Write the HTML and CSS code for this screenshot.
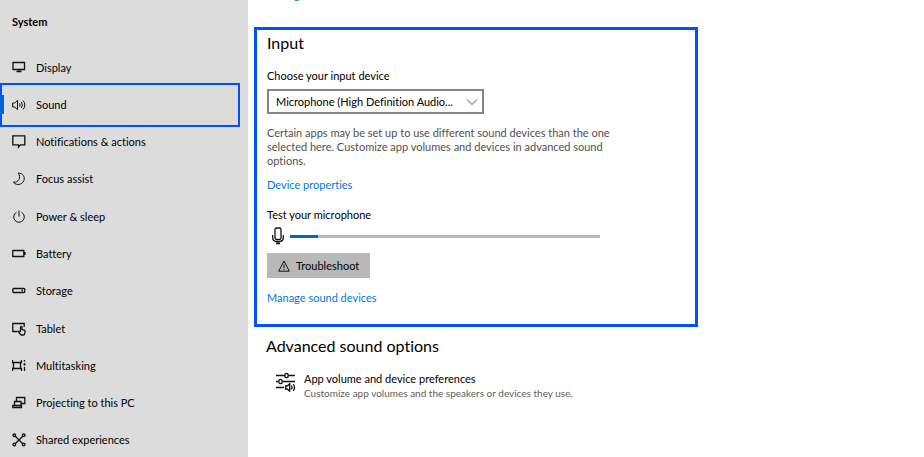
FILE: index.html
```html
<!DOCTYPE html>
<html lang="en">
<head>
<meta charset="utf-8">
<meta name="viewport" content="width=device-width, initial-scale=1">
<title>Sound settings</title>
<link rel="stylesheet" href="styles.css">
</head>
<body>
<div class="settings">
  <aside class="sidebar">
    <h2 class="sidebar-title">System</h2>
    <nav class="nav" aria-label="System">
      <a class="nav-item" href="#display">
        <svg class="icon" viewBox="0 0 14 14"><path d="M1 1.500h11.500v7H1zM7 8.500v2M4.500 10.500h5"/></svg>
        <span>Display</span></a>
      <a class="nav-item nav-item-current" href="#sound" aria-current="page">
        <svg class="icon icon-thin" viewBox="0 0 14 14"><path d="M.7 5h2L5.500 2.300v9.400L2.700 9h-2zM7.500 5.300q1.200 1.700 0 3.400M9.300 3.900q2.200 3.100 0 6.200M11.200 2.600q3.200 4.400 0 8.800"/></svg>
        <span>Sound</span></a>
      <a class="nav-item" href="#notifications">
        <svg class="icon" viewBox="0 0 14 14"><path d="M.8 .8h12v9H8.500L6.500 12v-2.200H.8z"/></svg>
        <span>Notifications &amp; actions</span></a>
      <a class="nav-item" href="#focus">
        <svg class="icon icon-thin" viewBox="0 0 14 14"><path d="M6.300 1C11 1.200 13.300 5 11.800 8.700 10.200 12.800 4.500 14 1.300 10.200 6.500 10.800 9.300 5.800 6.300 1z"/></svg>
        <span>Focus assist</span></a>
      <a class="nav-item" href="#power">
        <svg class="icon icon-thin" viewBox="0 0 14 14"><path d="M4.500 2.300a5.300 5.300 0 1 0 5 0M7 .6v6"/></svg>
        <span>Power &amp; sleep</span></a>
      <a class="nav-item" href="#battery">
        <svg class="icon" viewBox="0 0 14 14"><path d="M.8 3.500h11v6h-11zM13 5v3"/></svg>
        <span>Battery</span></a>
      <a class="nav-item" href="#storage">
        <svg class="icon" viewBox="0 0 14 14"><rect x=".8" y="4.500" width="12" height="4" rx="1"/><path d="M9.500 6.500h1.500"/></svg>
        <span>Storage</span></a>
      <a class="nav-item" href="#tablet">
        <svg class="icon" viewBox="0 0 14 14"><path d="M5.500 9.500H.8v-8h11.400v3.500M8.500 9.500V4.800q.8-1 1.500 0v2.700l2.300.6q.9.300.8 1.400l-.6 2.700q-.3.800-1.200.8H9.500q-.8 0-1.300-.8L6.300 9.500q.6-1 2.200.6"/></svg>
        <span>Tablet</span></a>
      <a class="nav-item" href="#multitasking">
        <svg class="icon" viewBox="0 0 14 14"><path d="M1.500 3.500h7v6h-7zM.5 1v2.500h9V1M.5 12V9.500h9V12M12.500 1v1.500M12.500 4v2.500M12.500 8v4M11.500 5.500h2"/></svg>
        <span>Multitasking</span></a>
      <a class="nav-item" href="#projecting">
        <svg class="icon" viewBox="0 0 14 14"><path d="M4.500 5.500v-4h8.300v6H9M2.500 5.500H9v4H2.500zM.8 11.500V9.500h8.700v2z"/></svg>
        <span>Projecting to this PC</span></a>
      <a class="nav-item" href="#shared">
        <svg class="icon" viewBox="0 0 14 14"><path d="M3.300 3.300l7.400 7.400M10.700 3.300l-7.400 7.400"/><circle cx="2.300" cy="2.300" r="1.300"/><circle cx="11.700" cy="2.300" r="1.300"/><circle cx="2.300" cy="11.500" r="1.300"/><circle cx="11.700" cy="11.500" r="1.300"/></svg>
        <span>Shared experiences</span></a>
    </nav>
  </aside>
  <main class="content">
    <a class="link output-link" href="#output-devices">Manage sound devices</a>
    <section class="panel">
      <h2 class="heading">Input</h2>
      <label class="label" for="device">Choose your input device</label>
      <div class="select-wrap">
        <select class="select" id="device"><option>Microphone (High Definition Audio...</option></select>
        <svg class="chevron" viewBox="0 0 12 12"><path d="M1 3.500l5 5 5-5"/></svg>
      </div>
      <p class="note">Certain apps may be set up to use different sound devices than the one selected here. Customize app volumes and devices in advanced sound options.</p>
      <a class="link" href="#properties">Device properties</a>
      <p class="label test-label" id="test">Test your microphone</p>
      <div class="meter">
        <svg class="mic" viewBox="0 0 14 18"><rect x="4" y="1" width="6" height="11.500" rx="1.500"/><path d="M1.700 8v3q0 3 3.300 3.500h4q3.300-.5 3.300-3.500V8M7 14.500v2M5 16.500h4"/></svg>
        <div class="track" role="meter" aria-labelledby="test" aria-valuenow="9" aria-valuemin="0" aria-valuemax="100"><div class="level"></div></div>
      </div>
      <button class="button" type="button">
        <svg class="warning" viewBox="0 0 12 12"><path d="M6 1L11.300 11.200H.7zM6 4.500v3.700M6 9.200v1"/></svg>
        Troubleshoot</button>
      <a class="link" href="#input-devices">Manage sound devices</a>
    </section>
    <section class="advanced">
      <h2 class="heading">Advanced sound options</h2>
      <a class="preference" href="#app-volume">
        <svg class="mixer" viewBox="0 0 20 20"><path d="M0 3.500h8.500M12.500 3.500H19M0 9.500h2.500M6.500 9.500H19M0 15.500h8"/><ellipse cx="10.500" cy="3.500" rx="1.700" ry="2.200"/><ellipse cx="4.500" cy="9.500" rx="1.700" ry="2.200"/><path d="M9.600 14h1.600l2.500-2.200v7.400L11.200 17H9.600zM15.300 13.500q1.400 2 0 4M17.300 12q2.300 3.500 0 7"/></svg>
        <span class="preference-text"><span class="preference-title">App volume and device preferences</span><span class="preference-detail">Customize app volumes and the speakers or devices they use.</span></span>
      </a>
    </section>
  </main>
</div>
</body>
</html>
```
FILE: styles.css
```css
* { box-sizing: border-box; }

body {
  margin: 0;
  background: #fff;
  color: #000;
  font-family: Lato, "Open Sans", sans-serif;
  font-size: 11px;
  font-variant-ligatures: none;
  line-height: 14px;
}

h2, p { margin: 0; font-weight: 400; }
a { text-decoration: none; }

svg {
  flex: none;
  fill: none;
  stroke: #111;
  stroke-width: 1.3;
}

.settings {
  display: flex;
  height: 100vh;
  overflow: hidden;
}

.sidebar {
  display: flex;
  flex-direction: column;
  flex: none;
  width: 248px;
  background: #dcdcdc;
}

.sidebar-title {
  padding: 15px 12px 20px;
  font-size: 11px;
  font-weight: 700;
}

.nav {
  display: grid;
  flex: 1;
  grid-auto-rows: 1fr;
  margin-bottom: -2px;
}

.nav-item {
  display: flex;
  align-items: center;
  gap: 10px;
  padding-left: 12px;
  color: #000;
}

.icon { width: 14px; height: 14px; }
.icon-thin { stroke-width: 1; }

.nav-item-current {
  position: relative;
  margin: -3px 8px -3px 0;
  border: 2px solid #0050ff;
  padding-left: 10px;
}

.nav-item-current::before {
  content: "";
  position: absolute;
  left: -2px;
  width: 4px;
  height: 19px;
  background: #0063d8;
}

.content {
  flex: 1;
  min-width: 0;
  padding: 0 6px;
}

.link {
  display: block;
  width: fit-content;
  color: #0078d7;
}

.output-link { margin: -12px 0 25px 13px; }

.panel {
  max-width: 444px;
  height: 300px;
  border: 3px solid #0050ff;
  padding: 2px 10px;
}

.heading {
  font-size: 16px;
  line-height: 22px;
}

.label { display: block; }
.panel > .label { margin-top: 15px; }

.select-wrap {
  display: flex;
  align-items: center;
  width: 217px;
  margin: 6px 0 12px;
}

.select {
  appearance: none;
  width: 100%;
  height: 25px;
  border: 2px solid #858585;
  border-radius: 0;
  padding: 0 20px 0 7px;
  background: #fff;
  color: #000;
  font: inherit;
}

.chevron {
  width: 12px;
  height: 12px;
  margin-left: -18px;
  stroke: #555;
  stroke-width: 1;
  pointer-events: none;
}

.note {
  max-width: 350px;
  margin-bottom: 10px;
  color: #505050;
}

.panel > .test-label { margin-top: 16px; }

.meter {
  display: flex;
  align-items: center;
  gap: 5px;
  max-width: 333px;
  margin: 5px 0 8px;
  padding-left: 4px;
}

.mic { width: 14px; height: 18px; }

.track {
  flex: 1;
  height: 3px;
  background: #b8b8b8;
}

.level {
  width: 9%;
  height: 100%;
  background: #0063d8;
}

.button {
  display: flex;
  align-items: center;
  gap: 6px;
  height: 25px;
  margin-bottom: 13px;
  border: 0;
  padding: 0 11px;
  background: #b8b8b8;
  color: #000;
  font: inherit;
}

.warning { width: 12px; height: 12px; stroke-width: 1; }

.advanced { padding: 8px 12px; }

.preference {
  display: flex;
  gap: 8px;
  margin-top: 15px;
  padding-left: 10px;
  color: #000;
}

.mixer { width: 20px; height: 20px; }

.preference-text {
  display: flex;
  flex-direction: column;
}

.preference-detail {
  color: #606060;
  font-size: 10px;
}
```
